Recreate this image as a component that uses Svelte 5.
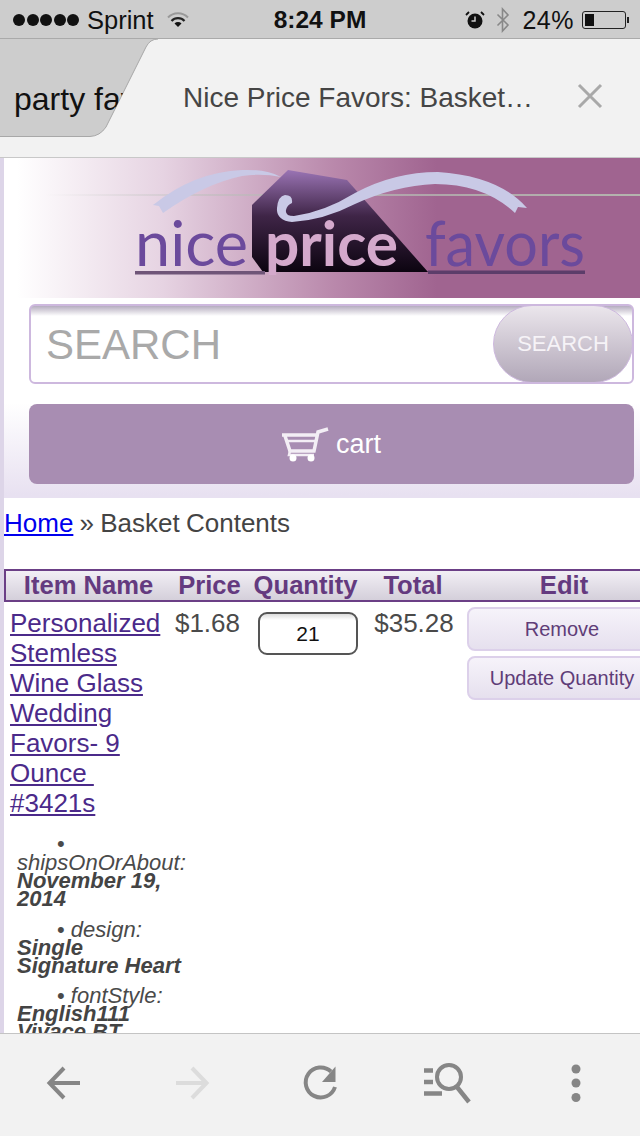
<script>
  const items = ['Personalized', 'Stemless', 'Wine Glass', 'Wedding', 'Favors- 9', 'Ounce ', '#3421s'];
  const options = [
    { name: 'shipsOnOrAbout:', value: ['November 19,', '2014'], wrap: true },
    { name: 'design:', value: ['Single', 'Signature Heart'] },
    { name: 'fontStyle:', value: ['English111', 'Vivace BT'] }
  ];
</script>

<div class="screen">
  <!-- status bar -->
  <div class="status">
    <div class="status-left">
      <span class="dots">{#each [0, 1, 2, 3, 4] as d}<i></i>{/each}</span>
      <span>Sprint</span>
      <svg class="wifi" width="22" height="16" viewBox="0 0 22 16">
        <path d="M1 5.5a14 14 0 0 1 20 0" fill="none" stroke="#999" stroke-width="2" />
        <path d="M4.500 9a9 9 0 0 1 13 0" fill="none" stroke="#222" stroke-width="2.200" />
        <path d="M7.500 11.500a5 5 0 0 1 7 0L11 15z" fill="#111" />
      </svg>
    </div>
    <div class="clock">8:24 PM</div>
    <div class="status-right">
      <svg width="20" height="22" viewBox="0 0 20 22">
        <circle cx="10" cy="12" r="7.500" fill="#111" />
        <path d="M10 7.500V12H6.500" fill="none" stroke="#ccc" stroke-width="1.500" />
        <path d="M1 6l3-3M19 6l-3-3" stroke="#111" stroke-width="1.800" />
      </svg>
      <svg class="bt" width="14" height="26" viewBox="0 0 14 26">
        <path d="M1.500 7.500L12 18l-5.500 6V2L12 8 1.500 18.500" fill="none" stroke="#888" stroke-width="1.600" />
      </svg>
      <span class="pct">24%</span>
      <span class="battery"><b></b></span>
      <span class="nub"></span>
    </div>
  </div>

  <!-- tabs -->
  <div class="tabs">
    <svg class="tab-shape" width="170" height="100" viewBox="0 0 170 100">
      <path d="M0 0H158Q150 0 146 8L106 88Q100 97 90 97.500H0z" fill="#cdcdcd" stroke="none" />
      <path d="M0 97.500H90Q100 97 106 88L146 8Q150 0 158 0" fill="none" stroke="#a8a8a8" stroke-width="1" />
    </svg>
    <div class="tab-other">party favors</div>
    <div class="tab-title">Nice Price Favors: Basket…</div>
    <svg class="tab-close" width="26" height="26" viewBox="0 0 26 26">
      <path d="M2 2l22 22M24 2L2 24" stroke="#a9a9a9" stroke-width="3" />
    </svg>
  </div>

  <!-- page content -->
  <main>
    <header>
      <div class="banner">
        <svg width="636" height="140" viewBox="0 0 636 140">
          <defs>
            <linearGradient id="tag" x1="0" y1="0" x2="0" y2="1">
              <stop offset="0" stop-color="#9a74b4" />
              <stop offset=".45" stop-color="#3f2547" />
              <stop offset="1" stop-color="#0c0410" />
            </linearGradient>
            <linearGradient id="hairline" x1="0" y1="0" x2="1" y2="0">
              <stop offset="0" stop-color="#b5c0b5" stop-opacity="0" />
              <stop offset=".4" stop-color="#b5bdb5" stop-opacity=".6" />
              <stop offset="1" stop-color="#b4b4ae" />
            </linearGradient>
            <clipPath id="tagclip"><rect x="0" y="0" width="636" height="117" /></clipPath>
          </defs>
          <rect x="40" y="36" width="596" height="2" fill="url(#hairline)" />
          <path d="M149 47Q190 14 238 12Q262 11 277 19Q258 15 238 18Q200 26 159 55L155 48z" fill="#c9c9e6" />
          <path d="M284 12L343 22 424 114H259L248 99V47z" fill="url(#tag)" />
          <path d="M281 37Q289 37 288 45Q283 47 282 52Q281 58 290 58Q320 54 351 35Q390 14 434 14Q495 18 523 50L514 49 511 55Q480 26 431 26Q390 28 351 46Q320 62 288 64Q272 62 273 50Q274 38 281 37z" fill="#c9c9e6" />
          <rect x="131" y="113" width="130" height="3.500" fill="#6f5578" />
          <rect x="424" y="112.500" width="157" height="3.500" fill="#5c3d6a" />
          <text class="lg" x="131" y="108" textLength="113" lengthAdjust="spacingAndGlyphs">nice</text>
          <text class="lg bold" x="261" y="108" textLength="133" lengthAdjust="spacingAndGlyphs" clip-path="url(#tagclip)">price</text>
          <text class="lg" x="421" y="108" textLength="160" lengthAdjust="spacingAndGlyphs">favors</text>
        </svg>
      </div>
      <div class="search">
        <span class="search-text">SEARCH</span>
        <button class="search-btn">SEARCH</button>
      </div>
      <div class="cart">
        <svg width="48" height="36" viewBox="0 0 48 36">
          <path d="M0 9H34M3 10l5 15H32L36 6 46 3" fill="none" stroke="#f3eef5" stroke-width="3.500" />
          <path d="M4 15H34M8 25l-1 4H32" fill="none" stroke="#f3eef5" stroke-width="2.500" />
          <circle cx="11" cy="32" r="3.500" fill="#fff" />
          <circle cx="29" cy="32" r="3.500" fill="#fff" />
        </svg>
        <span>cart</span>
      </div>
    </header>

    <div class="crumbs"><a href="#home">Home</a> » Basket Contents</div>

    <div class="thead">
      <span class="c-name">Item Name</span>
      <span class="c-price">Price</span>
      <span class="c-qty">Quantity</span>
      <span class="c-total">Total</span>
      <span class="c-edit">Edit</span>
    </div>

    <div class="row">
      <div class="c-name cell-name">
        {#each items as line}<a class="item" href="#item">{line}</a>{/each}
        <div class="opts">
          {#each options as o}
            <div class="opt">
              <div class="opt-name" class:wrap={o.wrap}>
                <span class="bullet">•</span>{#if !o.wrap}&nbsp;{/if}<em>{o.name}</em>
              </div>
              {#each o.value as v}<strong>{v}</strong>{/each}
            </div>
          {/each}
        </div>
      </div>
      <div class="c-price cell">$1.68</div>
      <div class="c-qty"><div class="qty">21</div></div>
      <div class="c-total cell total">$35.28</div>
      <div class="c-edit actions">
        <button class="action">Remove</button>
        <button class="action">Update Quantity</button>
      </div>
    </div>
  </main>

  <!-- bottom toolbar -->
  <nav>
    <svg width="40" height="40" viewBox="0 0 40 40"><path d="M36 20H6M20 5L5.500 20 20 35" fill="none" stroke="#868686" stroke-width="4" /></svg>
    <svg width="40" height="40" viewBox="0 0 40 40"><path d="M4 20H34M20 5l14.500 15L20 35" fill="none" stroke="#dcdcdc" stroke-width="4" /></svg>
    <svg width="40" height="40" viewBox="0 0 40 40">
      <path d="M31 8.500A15 15 0 1 0 35 24" fill="none" stroke="#868686" stroke-width="4" />
      <path d="M35.500 3.500V19H22z" fill="#868686" />
    </svg>
    <svg width="52" height="44" viewBox="0 0 52 44">
      <path d="M2 9.500H11M2 21H11M2 32.500H20" stroke="#868686" stroke-width="4.500" />
      <circle cx="27" cy="16" r="12" fill="none" stroke="#868686" stroke-width="4" />
      <path d="M35 26l12 15" stroke="#868686" stroke-width="4.500" />
    </svg>
    <svg width="40" height="40" viewBox="0 0 40 40">
      <circle cx="20" cy="6" r="4.500" fill="#868686" />
      <circle cx="20" cy="20" r="4.500" fill="#868686" />
      <circle cx="20" cy="34.500" r="4.500" fill="#868686" />
    </svg>
  </nav>
</div>

<style>
  :global(body) {
    margin: 0;
  }

  .screen {
    width: 640px;
    height: 1136px;
    display: flex;
    flex-direction: column;
    overflow: hidden;
    font-family: "Liberation Sans", Arial, sans-serif;
    background: #fff;
    color: #444;
  }

  .status {
    height: 38px;
    flex: none;
    background: #cdcdcd;
    color: #111;
    display: grid;
    grid-template-columns: 1fr auto 1fr;
    align-items: center;
    font-size: 25.500px;
    padding-top: 2px;
    box-sizing: border-box;
  }

  .status-left {
    display: flex;
    align-items: center;
    padding-left: 13px;
    gap: 8px;
  }

  .dots {
    display: flex;
    gap: 1.500px;
  }

  .dots i {
    width: 12px;
    height: 12px;
    border-radius: 50%;
    background: #111;
  }

  .wifi {
    margin-left: 5px;
  }

  .clock {
    font-weight: bold;
    font-size: 24.500px;
  }

  .status-right {
    display: flex;
    align-items: center;
    justify-content: flex-end;
    padding-right: 11px;
  }

  .bt {
    margin-left: 11px;
  }

  .pct {
    margin-left: 12px;
    font-size: 25px;
    letter-spacing: 0.5px;
  }

  .battery {
    width: 44px;
    height: 18px;
    margin-left: 8px;
    border: 1.500px solid #222;
    border-radius: 3px;
    padding: 2px;
    box-sizing: border-box;
    display: flex;
  }

  .battery b {
    width: 9px;
    background: #111;
  }

  .nub {
    width: 2px;
    height: 6px;
    background: #222;
    margin-left: 1px;
  }

  .tabs {
    height: 118px;
    flex: none;
    position: relative;
    background: #f2f2f2;
    border-top: 1px solid #aaa;
    border-bottom: 1px solid #c8c8c8;
    display: flex;
    align-items: flex-start;
  }

  .tab-shape {
    position: absolute;
    left: 0;
    top: 0;
  }

  .tab-other {
    position: absolute;
    left: 14px;
    top: 40px;
    width: 120px;
    overflow: hidden;
    white-space: nowrap;
    font-size: 32px;
    line-height: 40px;
    color: #111;
    clip-path: polygon(0 0, 116px 0, 96px 100%, 0 100%);
  }

  .tab-title {
    margin: 41px 0 0 183px;
    font-size: 28px;
    line-height: 36px;
    white-space: nowrap;
    color: #454545;
  }

  .tab-close {
    position: absolute;
    left: 577px;
    top: 44px;
  }

  main {
    flex: 1;
    min-height: 0;
    overflow: hidden;
    border-left: 4px solid #ddd5e8;
  }

  header {
    height: 340px;
    background: linear-gradient(#fff 0, #fff 72%, #e8e1f1 99%);
  }

  .banner {
    height: 140px;
    background: linear-gradient(90deg, #fff 2%, #e6d3e2 25%, #b988ab 52%, #a06490 68%);
    overflow: hidden;
  }

  .lg {
    font-family: Lato, "Liberation Sans", sans-serif;
    font-size: 61px;
    font-weight: 400;
    fill: #6b4a9c;
  }

  .bold {
    font-weight: 700;
    fill: #d4a9cc;
  }

  .search {
    margin: 6px 6px 0 25px;
    height: 80px;
    box-sizing: border-box;
    border: 2px solid #cdb8de;
    border-radius: 6px;
    background: linear-gradient(#b5adbf 0, #fff 10px);
    position: relative;
    display: flex;
    align-items: center;
  }

  .search-text {
    margin: 2px 0 0 15px;
    font-size: 42px;
    color: #a9a9a9;
  }

  .search-btn {
    position: absolute;
    right: -1px;
    top: -1px;
    width: 140px;
    height: 78px;
    border: 1.500px solid #cdb8de;
    border-radius: 39px;
    background: linear-gradient(#ebe6ec, #b1a7b8);
    color: #f6f3f7;
    font: 22px "Liberation Sans", Arial, sans-serif;
    padding: 0;
  }

  .cart {
    margin: 20px 6px 0 25px;
    height: 80px;
    border-radius: 8px;
    background: #a88db2;
    color: #fff;
    display: flex;
    align-items: center;
    justify-content: center;
    gap: 6px;
    font-size: 27px;
  }

  .crumbs {
    margin-top: 10px;
    height: 51px;
    font-size: 26px;
    line-height: 30px;
    word-spacing: -1px;
  }

  .crumbs a {
    color: #0000ee;
  }

  .thead,
  .row {
    display: grid;
    grid-template-columns: 165px 77px 115px 100px 202px;
  }

  .thead {
    height: 33px;
    margin-top: 10px;
    width: 636px;
    box-sizing: border-box;
    border: 2px solid #6b3f86;
    border-right: 0;
    background: linear-gradient(#f2eff5, #d4cfda);
    color: #643a7f;
    font-weight: bold;
    font-size: 25.600px;
    line-height: 29px;
    text-align: center;
  }

  .row {
    padding-top: 6px;
  }

  .cell-name {
    padding-left: 6px;
  }

  .item {
    display: block;
    font-size: 26px;
    line-height: 30px;
    color: #4b2a8a;
    text-decoration: underline;
    white-space: pre;
  }

  .opts {
    margin-top: 17px;
    padding-left: 7px;
    width: 172px;
  }

  .opt {
    margin-bottom: 11.500px;
    font-size: 22px;
    line-height: 18px;
  }

  .opt-name {
    padding-left: 40px;
    line-height: 19px;
    color: #4a4a4a;
  }

  .opt-name.wrap .bullet {
    display: block;
    line-height: 18px;
  }

  .opt-name.wrap em {
    display: block;
    margin-left: -40px;
  }

  .opt strong {
    display: block;
    font-style: italic;
    color: #444;
  }

  .cell {
    font-size: 26px;
    line-height: 30px;
    text-align: center;
    color: #4a4a4a;
  }

  .total {
    padding-left: 6px;
  }

  .qty {
    width: 100px;
    height: 43px;
    margin: 4px 0 0 12px;
    box-sizing: border-box;
    border: 2px solid #555;
    border-radius: 9px;
    background: linear-gradient(#dcdcdc 0, #fff 6px);
    color: #111;
    font-size: 21px;
    line-height: 39px;
    text-align: center;
  }

  .actions {
    display: flex;
    flex-direction: column;
    gap: 5px;
    padding-left: 6px;
    margin-top: -1px;
  }

  .action {
    width: 190px;
    height: 44px;
    box-sizing: border-box;
    padding: 0;
    text-align: center;
    border: 2px solid #dcd0ea;
    border-radius: 8px;
    background: linear-gradient(#f6f3fa, #e6e0ee);
    color: #5f3d78;
    font: 20px "Liberation Sans", Arial, sans-serif;
  }

  nav {
    height: 103px;
    flex: none;
    box-sizing: border-box;
    background: #f2f2f2;
    border-top: 1px solid #c4c4c4;
    display: grid;
    grid-template-columns: repeat(5, 1fr);
    justify-items: center;
    align-items: center;
    padding: 0 0 4px 0;
  }
</style>
